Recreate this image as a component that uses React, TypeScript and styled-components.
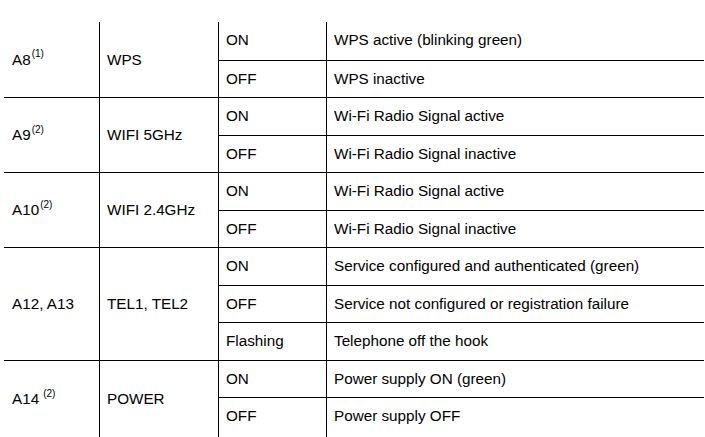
import React from "react";
import styled, { createGlobalStyle } from "styled-components";

const Global = createGlobalStyle`
  html, body { margin: 0; padding: 0; background: #fff; height: 100%; overflow: hidden; }
  #root { height: 100%; }
  body { font-family: "Liberation Sans", Arial, sans-serif; color: #000; }
`;

const Page = styled.div`
  height: 100%;
  padding: 22px 1px 0 4px;
  box-sizing: border-box;
  display: flex;
  flex-direction: column;
`;

const Table = styled.div<{ $rows: number }>`
  flex: 1;
  display: grid;
  grid-template-columns: 96px 119px 108px 1fr;
  grid-template-rows: ${(p) => `repeat(${p.$rows - 1}, 37.5px) minmax(37.5px, 1fr)`};
  font-size: 15.25px;
`;

const Cell = styled.div<{ $top?: boolean; $right?: boolean; $span?: number }>`
  box-sizing: border-box;
  border-top: ${(p) => (p.$top ? "1px solid #000" : "none")};
  border-right: ${(p) => (p.$right ? "1px solid #000" : "none")};
  grid-row: ${(p) => (p.$span ? `span ${p.$span}` : "auto")};
  padding-left: 7px;
  white-space: nowrap;
`;

const IdCell = styled(Cell)`
  display: flex;
  align-items: center;
  padding-left: 8px;
  padding-bottom: 1px;
`;

const NameCell = styled(Cell)`
  display: flex;
  align-items: center;
  padding-bottom: 1px;
`;

const StateCell = styled(Cell)`
  line-height: 35px;
`;

const DescCell = styled(Cell)`
  line-height: 35px;
`;

const Sup = styled.sup<{ $gap?: boolean }>`
  font-size: 10px;
  line-height: 0;
  position: relative;
  top: -1px;
  margin-left: ${(p) => (p.$gap ? "4px" : "1px")};
`;

type Item = {
  id: string;
  note?: string;
  gap?: boolean;
  name: string;
  states: [string, string][];
};

const data: Item[] = [
  {
    id: "A8",
    note: "(1)",
    name: "WPS",
    states: [
      ["ON", "WPS active (blinking green)"],
      ["OFF", "WPS inactive"],
    ],
  },
  {
    id: "A9",
    note: "(2)",
    name: "WIFI 5GHz",
    states: [
      ["ON", "Wi-Fi Radio Signal active"],
      ["OFF", "Wi-Fi Radio Signal inactive"],
    ],
  },
  {
    id: "A10",
    note: "(2)",
    name: "WIFI 2.4GHz",
    states: [
      ["ON", "Wi-Fi Radio Signal active"],
      ["OFF", "Wi-Fi Radio Signal inactive"],
    ],
  },
  {
    id: "A12, A13",
    name: "TEL1, TEL2",
    states: [
      ["ON", "Service configured and authenticated (green)"],
      ["OFF", "Service not configured or registration failure"],
      ["Flashing", "Telephone off the hook"],
    ],
  },
  {
    id: "A14",
    note: "(2)",
    gap: true,
    name: "POWER",
    states: [
      ["ON", "Power supply ON (green)"],
      ["OFF", "Power supply OFF"],
    ],
  },
];

const totalRows = data.reduce((n, g) => n + g.states.length, 0);

export default function App() {
  return (
    <>
      <Global />
      <Page>
        <Table $rows={totalRows}>
          {data.map((g, gi) => (
            <React.Fragment key={g.id}>
              <IdCell $top={gi > 0} $right $span={g.states.length}>
                <span>
                  {g.id}
                  {g.note && <Sup $gap={g.gap}>{g.note}</Sup>}
                </span>
              </IdCell>
              <NameCell $top={gi > 0} $right $span={g.states.length}>
                {g.name}
              </NameCell>
              {g.states.map(([s, d], si) => (
                <React.Fragment key={s}>
                  <StateCell $top={gi > 0 || si > 0} $right>
                    {s}
                  </StateCell>
                  <DescCell $top={gi > 0 || si > 0}>{d}</DescCell>
                </React.Fragment>
              ))}
            </React.Fragment>
          ))}
        </Table>
      </Page>
    </>
  );
}
